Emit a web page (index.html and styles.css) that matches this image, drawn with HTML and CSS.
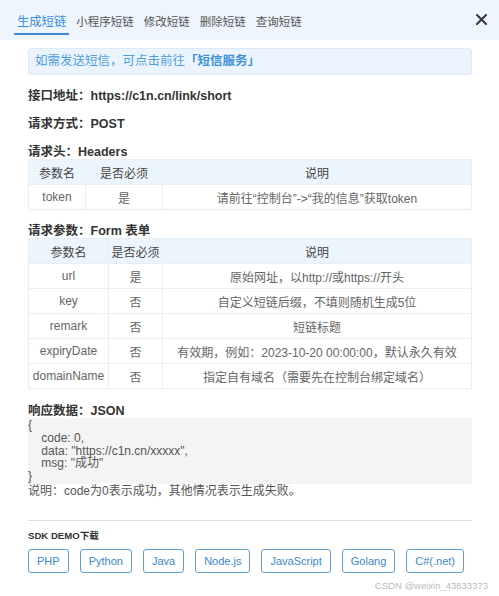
FILE: index.html
```html
<!DOCTYPE html>
<html lang="zh-CN">
<head>
<meta charset="utf-8">
<link rel="stylesheet" href="styles.css">
</head>
<body>
<div class="page">
  <div class="topbar">
    <nav class="tabs">
      <span class="tab active">生成短链</span>
      <span class="tab">小程序短链</span>
      <span class="tab">修改短链</span>
      <span class="tab">删除短链</span>
      <span class="tab">查询短链</span>
    </nav>
    <span class="close">
      <svg width="11" height="11" viewBox="0 0 11 11"><path d="M1 1 L10 10 M10 1 L1 10" stroke="#333" stroke-width="2" stroke-linecap="round"/></svg>
    </span>
  </div>
  <div class="content">
    <div class="alert">如需发送短信，可点击前往<b>「短信服务」</b></div>
    <div class="label">接口地址：https://c1n.cn/link/short</div>
    <div class="label">请求方式：POST</div>
    <div class="label">请求头：Headers</div>
    <table class="tbl">
      <colgroup><col class="c1a"><col class="c2a"><col></colgroup>
      <tr><th>参数名</th><th>是否必须</th><th>说明</th></tr>
      <tr><td>token</td><td>是</td><td>请前往“控制台”-&gt;“我的信息”获取token</td></tr>
    </table>
    <div class="label">请求参数：Form 表单</div>
    <table class="tbl">
      <colgroup><col class="c1b"><col class="c2b"><col></colgroup>
      <tr><th>参数名</th><th>是否必须</th><th>说明</th></tr>
      <tr><td>url</td><td>是</td><td>原始网址，以http://或https://开头</td></tr>
      <tr><td>key</td><td>否</td><td>自定义短链后缀，不填则随机生成5位</td></tr>
      <tr><td>remark</td><td>否</td><td>短链标题</td></tr>
      <tr><td>expiryDate</td><td>否</td><td>有效期，例如：2023-10-20 00:00:00，默认永久有效</td></tr>
      <tr><td>domainName</td><td>否</td><td>指定自有域名（需要先在控制台绑定域名）</td></tr>
    </table>
    <div class="label after2">响应数据：JSON</div>
    <pre class="json">{
    code: 0,
    data: "https://c1n.cn/xxxxx",
    msg: "成功"
}</pre>
    <div class="note">说明：code为0表示成功，其他情况表示生成失败。</div>
    <div class="divider"></div>
    <div class="sdk-title">SDK DEMO下载</div>
    <div class="btns">
      <span class="btn">PHP</span>
      <span class="btn">Python</span>
      <span class="btn">Java</span>
      <span class="btn">Node.js</span>
      <span class="btn">JavaScript</span>
      <span class="btn">Golang</span>
      <span class="btn">C#(.net)</span>
    </div>
  </div>
  <div class="watermark">CSDN @weixin_43833373</div>
</div>
</body>
</html>
```
FILE: styles.css
```css
* { box-sizing: border-box; }
html, body { margin: 0; padding: 0; background: #fff; }
body {
  font-family: "Liberation Sans", Arial, "Noto Sans CJK SC", sans-serif;
  color: #333;
}
.page { position: relative; width: 499px; height: 596px; overflow: hidden; }
.topbar {
  height: 40px;
  background: #eef5fc;
  display: flex;
  align-items: flex-start;
  justify-content: space-between;
  padding: 0 12px 0 14px;
}
.tabs { display: flex; gap: 4px; align-items: flex-start; }
.tab {
  font-size: 11.5px;
  color: #555;
  line-height: 16px;
  padding: 14px 3px 3px;
  border-bottom: 2px solid transparent;
  white-space: nowrap;
}
.tab.active { font-size: 12.3px; color: #3a8ddb; border-bottom-color: #3a8ddb; }
.close { padding-top: 14px; display: flex; }
.content { padding: 0 27px 0 28px; }
.alert {
  margin-top: 8px;
  height: 27px;
  line-height: 25px;
  background: #ebf4fd;
  border: 1px solid #dde9f6;
  border-radius: 3px;
  padding-left: 6px;
  font-size: 12.5px;
  color: #4d9fdc;
}
.alert b { font-weight: 700; color: #3d92d6; }
.label {
  font-size: 12.5px;
  font-weight: 700;
  line-height: 13px;
  padding-top: 2px;
  color: #333;
  margin-top: 13px;
}
.label.after2 { margin-top: 14px; }
.tbl {
  width: 100%;
  border-collapse: collapse;
  table-layout: fixed;
  font-size: 12px;
  color: #666;
}
.tbl th, .tbl td {
  border: 1px solid #e6eef6;
  height: 25px;
  padding: 0;
  text-align: center;
  white-space: nowrap;
}
.tbl th { background: #edf5fc; font-weight: 400; color: #444; }
.c1a { width: 57px; }
.c2a { width: 77px; }
.c1b { width: 80px; }
.c2b { width: 54px; }
.json {
  margin: 0;
  background: #f4f4f4;
  height: 66px;
  padding-top: 1px;
  font-family: "Liberation Sans", Arial, "Noto Sans CJK SC", sans-serif;
  font-size: 12px;
  line-height: 12.8px;
  color: #555;
}
.note { font-size: 12px; line-height: 15px; color: #555; }
.divider { height: 1px; background: #dcdcdc; margin-top: 21px; }
.sdk-title {
  margin-top: 8px;
  font-size: 9.6px;
  font-weight: 700;
  line-height: 14px;
  color: #333;
}
.btns { display: flex; gap: 11px; margin-top: 6px; align-items: flex-start; }
.btn {
  height: 24px;
  line-height: 22px;
  padding: 0 8px;
  border: 1px solid #5fa1d2;
  border-radius: 3px;
  font-size: 11px;
  color: #3b88cc;
  white-space: nowrap;
}
.watermark {
  position: absolute;
  right: 11px;
  bottom: 5px;
  font-size: 9.5px;
  color: #bbb;
  white-space: nowrap;
}
```
